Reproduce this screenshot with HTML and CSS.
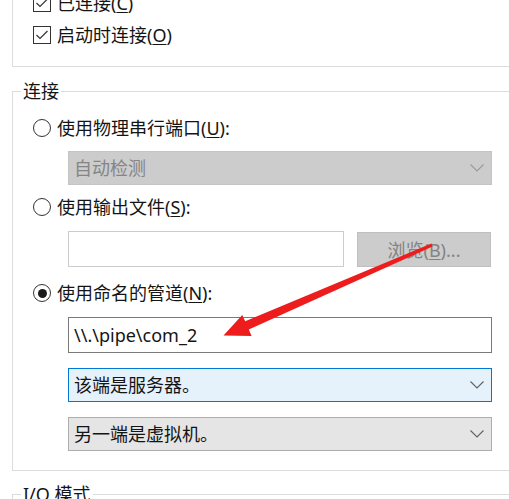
FILE: index.html
```html
<!DOCTYPE html>
<html lang="zh-CN">
<head>
<meta charset="utf-8">
<title>串行端口设置</title>
<link rel="stylesheet" href="styles.css">
</head>
<body>
<div class="page">
  <div class="group-top">
    <div class="row">
      <span class="check"><svg width="18" height="18" viewBox="0 0 18 18"><rect x="0.5" y="0.5" width="17" height="17" fill="#fff" stroke="#333"/><polyline points="3.5,9 7,12.5 14.5,5" fill="none" stroke="#333" stroke-width="1.2"/></svg></span>
      <span class="label">已连接(<u>C</u>)</span>
    </div>
    <div class="row">
      <span class="check"><svg width="18" height="18" viewBox="0 0 18 18"><rect x="0.5" y="0.5" width="17" height="17" fill="#fff" stroke="#333"/><polyline points="3.5,9 7,12.5 14.5,5" fill="none" stroke="#333" stroke-width="1.2"/></svg></span>
      <span class="label">启动时连接(<u>O</u>)</span>
    </div>
  </div>

  <fieldset class="group group-conn">
    <legend>连接</legend>
    <div class="row opt">
      <span class="radio"></span>
      <span class="label">使用物理串行端口(<u>U</u>):</span>
    </div>
    <div class="select disabled select-auto">
      <span>自动检测</span>
      <svg class="chev" width="14" height="8" viewBox="0 0 14 8"><polyline points="0.5,0.5 7,7 13.5,0.5" fill="none" stroke="currentColor" stroke-width="1.1"/></svg>
    </div>
    <div class="row opt opt-file">
      <span class="radio"></span>
      <span class="label">使用输出文件(<u>S</u>):</span>
    </div>
    <div class="file-row">
      <div class="textbox disabled"></div>
      <div class="button disabled">浏览(<u>B</u>)...</div>
    </div>
    <div class="row opt opt-pipe">
      <span class="radio checked"></span>
      <span class="label">使用命名的管道(<u>N</u>):</span>
    </div>
    <div class="textbox pipe">\\.\pipe\com_2</div>
    <div class="select focus select-end">
      <span>该端是服务器。</span>
      <svg class="chev" width="14" height="8" viewBox="0 0 14 8"><polyline points="0.5,0.5 7,7 13.5,0.5" fill="none" stroke="currentColor" stroke-width="1.1"/></svg>
    </div>
    <div class="select select-other">
      <span>另一端是虚拟机。</span>
      <svg class="chev" width="14" height="8" viewBox="0 0 14 8"><polyline points="0.5,0.5 7,7 13.5,0.5" fill="none" stroke="currentColor" stroke-width="1.1"/></svg>
    </div>
  </fieldset>

  <fieldset class="group group-io">
    <legend>I/O 模式</legend>
    <div class="io-body"></div>
  </fieldset>
</div>

<svg class="arrow" width="509" height="499" viewBox="0 0 509 499">
  <polygon points="223.5,335.5 251.6,336 248.8,329.6 432.6,246.4 431.4,243.6 245.2,321.3 242.2,315" fill="#ee1d1d"/>
</svg>
</body>
</html>
```

FILE: styles.css
```css
html, body {
  margin: 0;
  padding: 0;
  background: #ffffff;
  overflow: hidden;
}

body {
  width: 509px;
  height: 499px;
  position: relative;
  font-family: "Noto Sans", "Noto Sans CJK SC", sans-serif;
  font-size: 18px;
  line-height: 24px;
  color: #141414;
}

u {
  text-decoration: underline;
  text-underline-offset: 2px;
  text-decoration-thickness: 1px;
}

.page {
  padding-left: 12px;
}

.group-top {
  border-left: 1px solid #dcdcdc;
  border-bottom: 1px solid #dcdcdc;
  margin-top: -13px;
  padding: 0 0 15px 20px;
}

.group-top .row {
  height: 32px;
}

.row {
  display: flex;
  align-items: center;
  gap: 6px;
  height: 30px;
  white-space: nowrap;
}

.check {
  display: flex;
  width: 18px;
  height: 18px;
  flex: none;
}

.radio {
  width: 18px;
  height: 18px;
  box-sizing: border-box;
  border: 1.2px solid #333;
  border-radius: 50%;
  flex: none;
  display: flex;
  align-items: center;
  justify-content: center;
}

.radio.checked::after {
  content: "";
  width: 9px;
  height: 9px;
  border-radius: 50%;
  background: #1a1a1a;
}

.group {
  border: 1px solid #dcdcdc;
  border-right: none;
  margin: 0;
  min-width: 0;
}

.group legend {
  padding: 0 2px;
  margin-left: -12px;
  line-height: 24px;
  color: #141414;
}

.group-conn {
  margin-top: 12px;
  padding: 10px 17px 19px 20px;
}

.group-io {
  margin-top: 11px;
  padding: 0 17px 0 20px;
}

.io-body {
  height: 4px;
}

.select,
.textbox,
.button {
  box-sizing: border-box;
  display: flex;
  align-items: center;
}

.select {
  height: 34px;
  margin-left: 35px;
  padding: 0 6px 0 5px;
  justify-content: space-between;
  border: 1px solid #adadad;
  background: #e5e5e5;
  color: #141414;
}

.select .chev {
  color: #606060;
  margin-right: 1px;
}

.select.disabled {
  background: #cccccc;
  border-color: #c4c4c4;
  color: #858585;
}

.select.disabled .chev {
  color: #9a9a9a;
}

.select.focus {
  background: #e5f1fb;
  border-color: #0078d7;
}

.select-auto {
  margin-top: 8px;
}

.opt-file {
  margin-top: 7px;
}

.file-row {
  display: flex;
  gap: 13px;
  margin-left: 35px;
  margin-top: 9px;
}

.textbox {
  height: 36px;
  border: 1px solid #7a7a7a;
  background: #fff;
  padding: 0 5px;
}

.textbox.disabled {
  width: 276px;
  border-color: #cccccc;
}

.button {
  width: 134px;
  height: 35px;
  margin-top: 1px;
  justify-content: center;
  border: 1px solid #bfbfbf;
  background: #cccccc;
  color: #838383;
}

.opt-pipe {
  margin-top: 11px;
}

.pipe {
  margin-left: 35px;
  margin-top: 9px;
  color: #141414;
}

.select-end {
  margin-top: 15px;
}

.select-other {
  margin-top: 15px;
}

.arrow {
  position: absolute;
  left: 0;
  top: 0;
  pointer-events: none;
}
```
